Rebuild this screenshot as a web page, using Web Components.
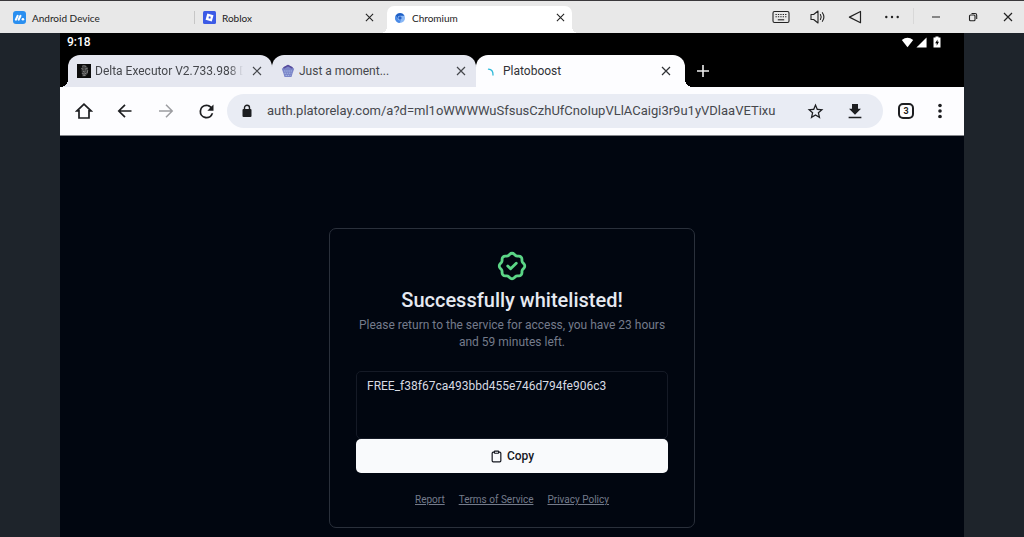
<!DOCTYPE html>
<html lang="en">
<head>
<meta charset="utf-8">
<title>Chromium</title>
<style>
  body { margin: 0; background: #1e242b; font-family: Roboto, "Liberation Sans", sans-serif; }
</style>
</head>
<body>
<emulator-app></emulator-app>

<script>
const define = (name, html, setup) => {
  const template = document.createElement("template");
  template.innerHTML = html;
  customElements.define(name, class extends HTMLElement {
    constructor() {
      super();
      this.attachShadow({ mode: "open" }).append(template.content.cloneNode(true));
    }
    connectedCallback() { if (setup) setup(this, this.shadowRoot); }
  });
};

const ICONS = {
  keyboard: ["0 0 18 14", `<g fill="none" stroke="currentColor" stroke-width="1.1"><rect x="1" y="1.5" width="16" height="11" rx="1.5"/><path d="M3.5 4.5h11M3.5 6.8h11" stroke-dasharray="1.3 1.1"/><path d="M5.8 9.8h6.4"/></g>`],
  volume: ["0 0 18 16", `<g fill="none" stroke="currentColor" stroke-width="1.1" stroke-linecap="round" stroke-linejoin="round"><path d="M2 5.5h2.6L9 2v12l-4.400-3.500H2z"/><path d="M11.400 5.500q1.600 2.500 0 5M13.400 3.700q3 4.300 0 8.600"/></g>`],
  triangle: ["0 0 14 14", `<path d="M12.500 1.500v11.200L1.400 7.100z" fill="none" stroke="currentColor" stroke-width="1.200" stroke-linejoin="round"/>`],
  dots: ["0 0 16 4", `<g fill="currentColor"><circle cx="2.300" cy="2" r="1.200"/><circle cx="8" cy="2" r="1.200"/><circle cx="13.700" cy="2" r="1.200"/></g>`],
  minimize: ["0 0 10 10", `<path d="M1 5h8" stroke="currentColor" stroke-width="1"/>`],
  restore: ["0 0 10 10", `<g fill="none" stroke="currentColor" stroke-width="1.100"><rect x="1.500" y="3" width="5.500" height="5.800" rx="1"/><path d="M3.500 1.500H7q1.700 0 1.700 1.700V7"/></g>`],
  close: ["0 0 10 10", `<path d="M1 1l8 8M9 1l-8 8" stroke="currentColor" stroke-width="1.200" fill="none"/>`],
  plus: ["0 0 12 12", `<path d="M6 0v12M0 6h12" stroke="currentColor" stroke-width="1.600"/>`],
  home: ["0 0 18 18", `<path d="M9 2.200L2 8.800h2V16h10V8.800h2z" fill="none" stroke="currentColor" stroke-width="1.700" stroke-linejoin="miter"/>`],
  back: ["0 0 18 18", `<path d="M15.500 9H3M9 2.800L2.800 9 9 15.200" fill="none" stroke="currentColor" stroke-width="1.700"/>`],
  forward: ["0 0 18 18", `<path d="M2 9h13M9 2.800L15.200 9 9 15.200" fill="none" stroke="currentColor" stroke-width="1.500"/>`],
  reload: ["0 0 24 24", `<path fill="currentColor" d="M17.650 6.350A7.960 7.960 0 0 0 12 4a8 8 0 1 0 7.730 10h-2.080A6 6 0 1 1 12 6c1.660 0 3.140.69 4.220 1.780L13 11h7V4z"/>`],
  lock: ["0 0 10 14", `<rect x=".5" y="5" width="9" height="8" rx="1" fill="currentColor"/><path d="M2.500 5.500V3.800a2.500 2.500 0 0 1 5 0v1.700" fill="none" stroke="currentColor" stroke-width="1.400"/>`],
  star: ["0 0 24 24", `<path fill="currentColor" d="M22 9.240l-7.190-.62L12 2 9.190 8.630 2 9.240l5.460 4.730L5.820 21 12 17.270 18.180 21l-1.630-7.030zM12 15.400l-3.760 2.270 1-4.280-3.320-2.880 4.380-.38L12 6.100l1.710 4.040 4.380.38-3.320 2.880 1 4.280z"/>`],
  download: ["0 0 24 24", `<path fill="currentColor" d="M20 9h-4V2.500H8V9H4l8 8zM3.500 19.500v2.300h17v-2.300z"/>`],
  more: ["0 0 4 16", `<g fill="currentColor"><circle cx="2" cy="2.500" r="1.800"/><circle cx="2" cy="8" r="1.800"/><circle cx="2" cy="13.500" r="1.800"/></g>`],
  wifi: ["0 0 14 12", `<path fill="currentColor" d="M7 11.300L.8 3.400Q7-1.600 13.200 3.400z"/>`],
  signal: ["0 0 12 12", `<path fill="currentColor" d="M11.500 .5v11H.5z"/>`],
  battery: ["0 0 8 12", `<path fill="currentColor" d="M2.500.5h3v1H7.500v10H.5v-10h2z"/><path fill="#000" d="M4.500 3.500v2.200H6L3.700 9.700V7.300H2.200z"/>`],
  badge: ["0 0 24 24", `<g fill="none" stroke="currentColor" stroke-width="2" stroke-linecap="round" stroke-linejoin="round"><path d="M5 7.200A2.200 2.200 0 0 1 7.200 5h1a2.200 2.200 0 0 0 1.550-.64l.7-.7a2.200 2.200 0 0 1 3.120 0l.7.7c.412.41.97.64 1.550.64h1a2.200 2.200 0 0 1 2.200 2.200v1c0 .58.23 1.138.64 1.550l.7.7a2.200 2.200 0 0 1 0 3.120l-.7.7a2.200 2.200 0 0 0-.64 1.550v1a2.200 2.200 0 0 1-2.200 2.200h-1a2.200 2.200 0 0 0-1.550.64l-.7.7a2.200 2.200 0 0 1-3.120 0l-.7-.7a2.200 2.200 0 0 0-1.550-.64h-1a2.200 2.200 0 0 1-2.200-2.200v-1a2.200 2.200 0 0 0-.64-1.550l-.7-.7a2.200 2.200 0 0 1 0-3.120l.7-.7A2.200 2.200 0 0 0 5 8.200z"/><path d="M9 12l2 2 4-4"/></g>`],
  clipboard: ["0 0 24 24", `<g fill="none" stroke="currentColor" stroke-width="2.200" stroke-linecap="round" stroke-linejoin="round"><rect x="8" y="2" width="8" height="4" rx="1"/><path d="M16 4h2a2 2 0 0 1 2 2v14a2 2 0 0 1-2 2H6a2 2 0 0 1-2-2V6a2 2 0 0 1 2-2h2"/></g>`],
  device: ["0 0 13 13", `<rect width="13" height="13" rx="3" fill="#2a8ff0"/><path d="M2.800 8.700l1.900-3.900M5.600 8.700l1.900-3.900" stroke="#fff" stroke-width="2" stroke-linecap="round"/><circle cx="9.900" cy="8.300" r="1.300" fill="#fff"/>`],
  roblox: ["0 0 13 13", `<rect width="13" height="13" rx="1.500" fill="#3c5be6"/><path fill="#fff" fill-rule="evenodd" d="M4.300 2.600l6.200 1.700-1.700 6.200-6.200-1.700zM5.900 5.300l-.4 1.900 1.800.5.500-1.900z"/>`],
  chromium: ["0 0 12 12", `<circle cx="6" cy="6" r="5" fill="#8ab8f5"/><path d="M6 1a5 5 0 0 1 4.500 2.800H6A2.300 2.300 0 0 0 3.800 7L1.700 3.500A5 5 0 0 1 6 1z" fill="#1f5fc4"/><path d="M1.700 3.500L3.900 7.200A2.300 2.300 0 0 0 7 8L5.600 11A5 5 0 0 1 1.700 3.500z" fill="#4a8ae6"/><circle cx="6" cy="6" r="2.100" fill="#a9cbf7"/><circle cx="6" cy="6" r="1.700" fill="#2460c8"/>`],
  delta: ["0 0 14 14", `<path fill="#0c0c0c" d="M0 0h14v14H0z"/><path d="M5 2.500l4-1 2 2.500-.5 6L8 12.500 5.500 11l-1-4z" fill="#3f3f3f"/><g fill="none" stroke="#8d8d8d" stroke-width=".8"><path d="M5 2.200q2-1.200 4 .2M4.200 4.500l2 .8M8 5.200l2.500-.9M6 7.200l1.400.8 1.200-1M4.800 9.500q2.600 1.400 4.600-.4M5.500 11.800l3-.4M10.800 6l-.6 3.200"/></g>`],
  moment: ["0 0 14 14", `<path d="M3 3.200L7 .8l4 2.400 2.200 1.500-1.600 4.500L10.500 13h-7L2.400 9.200.8 4.700z" fill="#7b84c8"/><path d="M2.500 4L7 1.600l4.500 2.400" stroke="#564a9c" stroke-width="1.500" fill="none"/><path d="M3 7h8M3.500 9.200h7M4.500 11.400h5" stroke="#a9c0e8" stroke-width=".9" stroke-dasharray="1.500 .7"/>`],
  spinner: ["0 0 14 14", `<path d="M3.500 5.200q4.700.4 4.500 5.800" fill="none" stroke="#2fb9d9" stroke-width="1.300" stroke-linecap="round"/>`]
};

define("ui-icon", `
  <style>
    :host { display: inline-flex; flex: none; }
    svg { display: block; width: 100%; height: 100%; }
  </style>`, (el, root) => {
  const [box, body] = ICONS[el.getAttribute("name")];
  el.style.width = el.getAttribute("w") + "px";
  el.style.height = (el.getAttribute("h") || el.getAttribute("w")) + "px";
  if (!root.querySelector("svg"))
    root.innerHTML += `<svg viewBox="${box}" aria-hidden="true">${body}</svg>`;
});

define("icon-button", `
  <style>
    :host { display: flex; flex: none; }
    button { flex: 1; display: flex; align-items: center; justify-content: center; min-width: 0;
             padding: 0; border: 0; background: none; color: inherit; font: inherit; }
  </style>
  <button type="button"><slot></slot></button>`, (el, root) => {
  root.querySelector("button").setAttribute("aria-label", el.getAttribute("label"));
});

define("window-tab", `
  <style>
    :host { display: flex; align-items: center; gap: 6px; position: relative; flex: 0 1 186px; min-width: 0;
            height: 27px; padding: 0 4px 4px 8px; box-sizing: border-box; color: #222; }
    :host([active]) { flex-basis: 185px; padding-left: 7px; background: #fff; border-radius: 7px 7px 0 0; margin-left: 6px; }
    :host([active])::before, :host([active])::after { content: ""; position: absolute; bottom: 0; width: 6px; height: 6px; }
    :host([active])::before { right: 100%; background: radial-gradient(circle at 0 0, transparent 6px, #fff 6px); }
    :host([active])::after { left: 100%; background: radial-gradient(circle at 100% 0, transparent 6px, #fff 6px); }
    :host([divided]) { flex-basis: 190px; border-right: 1px solid #c6c6c6; height: 13px; padding-bottom: 0; margin-bottom: 9px; }
    .label { flex: 1; white-space: nowrap; }
    icon-button { width: 16px; height: 16px; }
    :host([divided]) icon-button { display: none; }
  </style>
  <slot name="icon"></slot><span class="label"><slot></slot></span>
  <icon-button label="Close tab"><ui-icon name="close" w="9"></ui-icon></icon-button>`);

define("window-bar", `
  <style>
    :host { display: flex; align-items: flex-end; box-sizing: border-box; height: 33px; padding-left: 5px;
            border-top: 1px solid #3a383b; background: #e8e8e8; color: #222;
            font: 10px/14px Lato, "Noto Sans", sans-serif; }
    nav { display: flex; align-items: flex-end; flex: 1; min-width: 0; }
    .tools, .window { display: flex; }
    .tools { align-self: stretch; }
    .tools icon-button { width: 37px; }
    .rule { width: 1px; height: 16px; margin: 7px 3px 0; background: #d8d8d8; }
    .window .quit { width: 33px; }
  </style>
  <nav aria-label="Apps">
    <window-tab divided><ui-icon slot="icon" name="device" w="13"></ui-icon>Android Device</window-tab>
    <window-tab><ui-icon slot="icon" name="roblox" w="13"></ui-icon>Roblox</window-tab>
    <window-tab active><ui-icon slot="icon" name="chromium" w="12"></ui-icon>Chromium</window-tab>
  </nav>
  <div class="tools">
    <icon-button label="Keyboard"><ui-icon name="keyboard" w="18" h="14"></ui-icon></icon-button>
    <icon-button label="Volume"><ui-icon name="volume" w="18" h="16"></ui-icon></icon-button>
    <icon-button label="Back"><ui-icon name="triangle" w="14"></ui-icon></icon-button>
    <icon-button label="More"><ui-icon name="dots" w="16" h="4"></ui-icon></icon-button>
    <span class="rule"></span>
    <div class="window">
      <icon-button label="Minimize"><ui-icon name="minimize" w="10"></ui-icon></icon-button>
      <icon-button label="Restore"><ui-icon name="restore" w="10"></ui-icon></icon-button>
      <icon-button class="quit" label="Close"><ui-icon name="close" w="10"></ui-icon></icon-button>
    </div>
  </div>`);

define("status-bar", `
  <style>
    :host { display: flex; align-items: center; justify-content: space-between; height: 18px; padding: 0 23px 0 7px;
            color: #fff; font-size: 12px; font-weight: 500; line-height: 16px; }
    .icons { display: flex; align-items: center; gap: 2px; }
    .icons :last-child { margin-left: 4px; }
  </style>
  <time>9:18</time>
  <div class="icons">
    <ui-icon name="wifi" w="13" h="11"></ui-icon><ui-icon name="signal" w="11"></ui-icon><ui-icon name="battery" w="8" h="12"></ui-icon>
  </div>`);

define("browser-tab", `
  <style>
    :host { --fill: #e5e7f0; display: flex; align-items: center; position: relative; flex: 0 1 204px; min-width: 0; box-sizing: border-box;
            height: 32px; padding: 0 5px 0 9px; gap: 4px; border-radius: 12px 12px 0 0; background: var(--fill);
            color: #45474c; font-size: 12px; line-height: 16px; }
    :host([active]) { --fill: #fdfdff; flex-basis: 209px; color: #303236; padding-right: 9px; }
    :host([first])::before, :host([active])::after { content: ""; position: absolute; bottom: 0; width: 8px; height: 8px; }
    :host([first])::before { right: 100%; background: radial-gradient(circle at 0 0, transparent 8px, var(--fill) 8px); }
    :host([active])::after { left: 100%; background: radial-gradient(circle at 100% 0, transparent 8px, var(--fill) 8px); }
    .label { flex: 1; min-width: 0; overflow: hidden; white-space: nowrap; }
    :host([long]) .label { mask-image: linear-gradient(to left, transparent, #000 14px); }
    icon-button { width: 20px; height: 20px; }
  </style>
  <slot name="icon"></slot><span class="label"><slot></slot></span>
  <icon-button label="Close tab"><ui-icon name="close" w="10"></ui-icon></icon-button>`);

define("tab-strip", `
  <style>
    :host { display: flex; padding: 4px 8px 0; }
    .add { width: 36px; color: #eee; }
  </style>
  <browser-tab first long><ui-icon slot="icon" name="delta" w="14"></ui-icon>Delta Executor V2.733.988 D</browser-tab>
  <browser-tab><ui-icon slot="icon" name="moment" w="14"></ui-icon>Just a moment...</browser-tab>
  <browser-tab active><ui-icon slot="icon" name="spinner" w="14"></ui-icon>Platoboost</browser-tab>
  <icon-button class="add" label="New tab"><ui-icon name="plus" w="12"></ui-icon></icon-button>`);

define("browser-toolbar", `
  <style>
    :host { display: flex; align-items: center; box-sizing: border-box; height: 49px; padding: 0 13px 0 3px;
            background: #fdfdff; border-bottom: 1px solid #85878c; color: #1d1e21; }
    .nav { width: 41px; height: 40px; }
    .off { color: #9c9da1; }
    form { display: flex; align-items: center; flex: 1; min-width: 0; height: 34px; padding-right: 8px; border-radius: 17px; background: #e9ecf4; }
    form icon-button { width: 40px; height: 34px; }
    input { flex: 1; min-width: 0; padding: 0; border: 0; outline: 0; background: none; color: #46484d;
            font: 13px/20px Roboto, sans-serif; }
    .tabs { width: 46px; height: 40px; }
    .count { display: block; box-sizing: border-box; width: 16px; height: 16px; border: 2px solid #1d1e21; border-radius: 5px;
             font: 700 9px/12px Roboto, sans-serif; text-align: center; }
    .menu { width: 22px; height: 40px; }
  </style>
  <icon-button class="nav" label="Home"><ui-icon name="home" w="18"></ui-icon></icon-button>
  <icon-button class="nav" label="Back"><ui-icon name="back" w="18"></ui-icon></icon-button>
  <icon-button class="nav off" label="Forward"><ui-icon name="forward" w="18"></ui-icon></icon-button>
  <icon-button class="nav" label="Reload"><ui-icon name="reload" w="21"></ui-icon></icon-button>
  <form>
    <icon-button label="Site information"><ui-icon name="lock" w="10" h="14"></ui-icon></icon-button>
    <input type="text" aria-label="Address" spellcheck="false" value="auth.platorelay.com/a?d=ml1oWWWWuSfsusCzhUfCnoIupVLlACaigi3r9u1yVDlaaVETixu">
    <icon-button label="Bookmark"><ui-icon name="star" w="19"></ui-icon></icon-button>
    <icon-button label="Downloads"><ui-icon name="download" w="18"></ui-icon></icon-button>
  </form>
  <icon-button class="tabs" label="Open tabs"><span class="count">3</span></icon-button>
  <icon-button class="menu" label="Menu"><ui-icon name="more" w="4" h="16"></ui-icon></icon-button>`);

define("whitelist-card", `
  <style>
    :host { display: flex; flex-direction: column; box-sizing: border-box; width: 100%; max-width: 366px;
            padding: 20px 26px 19px; border: 1px solid #2a303b; border-radius: 7px; text-align: center; color: #e6e9f1; }
    .ok { align-self: center; color: #5bd586; }
    h1 { margin: 3px 0; font-size: 20px; line-height: 28px; font-weight: 500; }
    p { margin: 0 0 20px; color: #747b8b; font-size: 12px; line-height: 17px; }
    textarea { box-sizing: border-box; width: 100%; height: 68px; padding: 6px 10px; border: 1px solid #151a26; border-radius: 5px;
               outline: 0; background: none; color: #d8dbe3; font: 12px/17px Roboto, sans-serif; resize: none; }
    button { display: flex; align-items: center; justify-content: center; gap: 4px; height: 34px; padding: 0; border: 0; border-radius: 5px;
             background: #f9fafc; color: #15171f; font: 500 12px/17px Roboto, sans-serif; }
    footer { display: flex; justify-content: center; gap: 14px; margin-top: 18px; font-size: 10px; line-height: 17px; }
    a { color: #747b8b; text-decoration: underline; text-underline-offset: 1px; }
  </style>
  <ui-icon class="ok" name="badge" w="34"></ui-icon>
  <h1>Successfully whitelisted!</h1>
  <p>Please return to the service for access, you have 23 hours and 59 minutes left.</p>
  <textarea aria-label="Key" readonly spellcheck="false">FREE_f38f67ca493bbd455e746d794fe906c3</textarea>
  <button type="button"><ui-icon name="clipboard" w="13"></ui-icon>Copy</button>
  <footer><a href="#report">Report</a><a href="#terms">Terms of Service</a><a href="#privacy">Privacy Policy</a></footer>`);

define("emulator-app", `
  <style>
    :host { display: flex; flex-direction: column; min-height: 100vh; }
    .device { display: flex; flex-direction: column; flex: 1; margin: 0 60px; background: #000; }
    main { display: flex; justify-content: center; align-items: flex-start; flex: 1; padding: 92px 16px 8px; background: #010610; }
  </style>
  <window-bar></window-bar>
  <div class="device">
    <status-bar></status-bar>
    <tab-strip></tab-strip>
    <browser-toolbar></browser-toolbar>
    <main><whitelist-card></whitelist-card></main>
  </div>`);
</script>
</body>
</html>
